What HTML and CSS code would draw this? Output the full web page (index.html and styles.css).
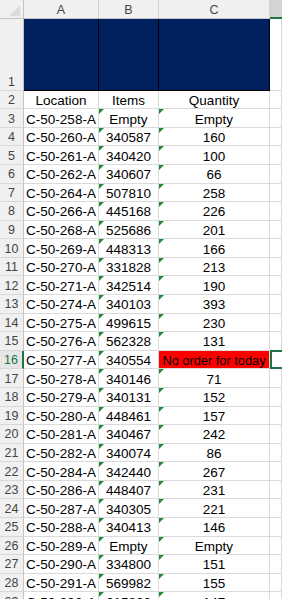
FILE: index.html
```html
<!DOCTYPE html>
<html>
<head>
<meta charset="utf-8">
<link rel="stylesheet" href="styles.css">
</head>
<body>
<div class="sheet">
  <div class="hd corner"><svg width="24" height="19" viewBox="0 0 24 19"><polygon points="21,5 21,16 10,16" fill="#d9d9d9"/></svg></div>
  <div class="hd col">A</div>
  <div class="hd col">B</div>
  <div class="hd col">C</div>
  <div class="hd col sel-col"></div>

  <div class="rh tall">1</div>
  <div class="c navy"></div>
  <div class="c navy"></div>
  <div class="c navy last"></div>
  <div class="c"></div>

  <div class="rh">2</div><div class="c">Location</div><div class="c">Items</div><div class="c">Quantity</div><div class="c"></div>
  <div class="rh">3</div><div class="c">C-50-258-A</div><div class="c t">Empty</div><div class="c t">Empty</div><div class="c"></div>
  <div class="rh">4</div><div class="c">C-50-260-A</div><div class="c t">340587</div><div class="c t">160</div><div class="c"></div>
  <div class="rh">5</div><div class="c">C-50-261-A</div><div class="c t">340420</div><div class="c t">100</div><div class="c"></div>
  <div class="rh">6</div><div class="c">C-50-262-A</div><div class="c t">340607</div><div class="c t">66</div><div class="c"></div>
  <div class="rh">7</div><div class="c">C-50-264-A</div><div class="c t">507810</div><div class="c t">258</div><div class="c"></div>
  <div class="rh">8</div><div class="c">C-50-266-A</div><div class="c t">445168</div><div class="c t">226</div><div class="c"></div>
  <div class="rh">9</div><div class="c">C-50-268-A</div><div class="c t">525686</div><div class="c t">201</div><div class="c"></div>
  <div class="rh">10</div><div class="c">C-50-269-A</div><div class="c t">448313</div><div class="c t">166</div><div class="c"></div>
  <div class="rh">11</div><div class="c">C-50-270-A</div><div class="c t">331828</div><div class="c t">213</div><div class="c"></div>
  <div class="rh">12</div><div class="c">C-50-271-A</div><div class="c t">342514</div><div class="c t">190</div><div class="c"></div>
  <div class="rh">13</div><div class="c">C-50-274-A</div><div class="c t">340103</div><div class="c t">393</div><div class="c"></div>
  <div class="rh">14</div><div class="c">C-50-275-A</div><div class="c t">499615</div><div class="c t">230</div><div class="c"></div>
  <div class="rh">15</div><div class="c">C-50-276-A</div><div class="c t">562328</div><div class="c t">131</div><div class="c"></div>
  <div class="rh sel-row">16</div><div class="c">C-50-277-A</div><div class="c t">340554</div><div class="c red">No order for today</div><div class="c active"></div>
  <div class="rh">17</div><div class="c">C-50-278-A</div><div class="c t">340146</div><div class="c t">71</div><div class="c"></div>
  <div class="rh">18</div><div class="c">C-50-279-A</div><div class="c t">340131</div><div class="c t">152</div><div class="c"></div>
  <div class="rh">19</div><div class="c">C-50-280-A</div><div class="c t">448461</div><div class="c t">157</div><div class="c"></div>
  <div class="rh">20</div><div class="c">C-50-281-A</div><div class="c t">340467</div><div class="c t">242</div><div class="c"></div>
  <div class="rh">21</div><div class="c">C-50-282-A</div><div class="c t">340074</div><div class="c t">86</div><div class="c"></div>
  <div class="rh">22</div><div class="c">C-50-284-A</div><div class="c t">342440</div><div class="c t">267</div><div class="c"></div>
  <div class="rh">23</div><div class="c">C-50-286-A</div><div class="c t">448407</div><div class="c t">231</div><div class="c"></div>
  <div class="rh">24</div><div class="c">C-50-287-A</div><div class="c t">340305</div><div class="c t">221</div><div class="c"></div>
  <div class="rh">25</div><div class="c">C-50-288-A</div><div class="c t">340413</div><div class="c t">146</div><div class="c"></div>
  <div class="rh">26</div><div class="c">C-50-289-A</div><div class="c t">Empty</div><div class="c t">Empty</div><div class="c"></div>
  <div class="rh">27</div><div class="c">C-50-290-A</div><div class="c t">334800</div><div class="c t">151</div><div class="c"></div>
  <div class="rh">28</div><div class="c">C-50-291-A</div><div class="c t">569982</div><div class="c t">155</div><div class="c"></div>
  <div class="rh">29</div><div class="c">C-50-292-A</div><div class="c t">615830</div><div class="c t">147</div><div class="c"></div>
</div>
</body>
</html>
```
FILE: styles.css
```css
html, body {
  margin: 0;
  padding: 0;
  background: #ffffff;
  overflow: hidden;
}
.sheet {
  display: grid;
  grid-template-columns: 24px 75px 60px 111px 1fr;
  grid-template-rows: 19px 71.7px repeat(28, 18.58px);
  font-family: "Liberation Sans", Arial, sans-serif;
  width: 282px;
  height: 599px;
  overflow: hidden;
}
.hd {
  background: #f0f0f0;
  border-right: 1px solid #d0d0d0;
  border-bottom: 1px solid #c4c4c4;
  box-sizing: border-box;
  display: flex;
  align-items: center;
  justify-content: center;
  font-size: 12.5px;
  color: #444444;
  padding-top: 1px;
}
.corner {
  padding: 0;
  border-right: 1px solid #c4c4c4;
}
.corner svg { display: block; }
.sel-col {
  background: #d3d3d3;
  border-right: none;
  border-bottom: 2px solid #217346;
}
.rh {
  background: #f0f0f0;
  border-right: 1px solid #c4c4c4;
  border-bottom: 1px solid #d8d8d8;
  box-sizing: border-box;
  display: flex;
  align-items: center;
  justify-content: center;
  font-size: 12.5px;
  color: #444444;
  padding-top: 1px;
}
.rh.tall {
  align-items: flex-end;
  padding-bottom: 1px;
}
.rh.sel-row {
  color: #217346;
  background: #e6e6e6;
  border-right: 2px solid #217346;
}
.c {
  position: relative;
  border-right: 1px solid #dadada;
  border-bottom: 1px solid #dadada;
  box-sizing: border-box;
  display: flex;
  align-items: center;
  justify-content: center;
  font-size: 13.5px;
  color: #000000;
  white-space: nowrap;
  overflow: hidden;
  padding-top: 2px;
}
.navy {
  background: #002060;
  border-right: 1px solid #000000;
  border-bottom: 1px solid #000000;
}
.t::before {
  content: "";
  position: absolute;
  left: 0;
  top: 0;
  border-top: 5px solid #1f8a3a;
  border-right: 5px solid transparent;
}
.red {
  background: #ff0000;
  font-size: 12.8px;
}
.active {
  border: 2px solid #217346;
  border-right: none;
  margin-top: -1px;
}
```
